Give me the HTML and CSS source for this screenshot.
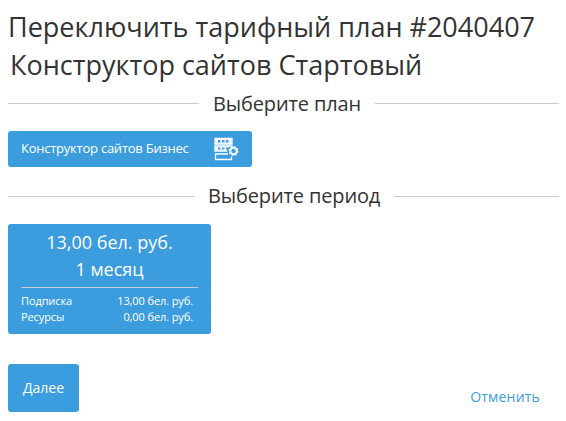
FILE: index.html
```html
<!DOCTYPE html>
<html lang="ru">
<head>
<meta charset="utf-8">
<title>Переключить тарифный план</title>
<link rel="stylesheet" href="styles.css">
</head>
<body>
<main class="page">
  <h1 class="title"><span class="title-line">Переключить тарифный план #2040407</span><span class="title-line title-plan">Конструктор сайтов Стартовый</span></h1>
  <h2 class="divider divider-plan">Выберите план</h2>
  <button class="plan">
    <span class="plan-name">Конструктор сайтов Бизнес</span>
    <svg class="plan-icon" viewBox="0 0 26 26" fill="none" stroke="#fff" stroke-width="1.3">
      <path d="M2 2.500h17v5.500H2zM19 11V10H2v5h12M15 18H2.500v5.500H18.500V20.500"/>
      <path d="M2.500 5.200h2.500M7.500 5.200h1.500M11.500 5.200h1.500M15.500 5.200h3M2.500 12.500h2.500M7.500 12.500h1.500M11.500 12.500h1.500" stroke-width="3"/>
      <path d="M2 3.500h17M2 7h17M2 11h14M2 14h12" stroke-width="1"/>
      <circle cx="20.500" cy="15" r="3.200" stroke-width="2"/>
      <circle cx="20.500" cy="15" r="4.400" stroke-width="1.200" stroke-dasharray="1.728 1.728"/>
    </svg>
  </button>
  <h2 class="divider divider-period">Выберите период</h2>
  <section class="period">
    <div class="price">13,00 бел. руб.</div>
    <div class="term">1 месяц</div>
    <dl class="costs">
      <div class="cost"><dt>Подписка</dt><dd>13,00 бел. руб.</dd></div>
      <div class="cost"><dt>Ресурсы</dt><dd>0,00 бел. руб.</dd></div>
    </dl>
  </section>
  <footer class="actions">
    <button class="next">Далее</button>
    <a class="cancel">Отменить</a>
  </footer>
</main>
</body>
</html>
```
FILE: styles.css
```css
* { box-sizing: border-box; }
body { margin: 0; background: #fff; color: #333; font-family: "Open Sans", sans-serif; }
.page { width: 566px; height: 421px; padding: 8px 7px 0 8px; overflow: hidden; }
h1, h2, dl, dd { margin: 0; font-weight: 400; }
button { border: 0; color: #fff; background: #3b9cde; border-radius: 3px; font: 13px "Open Sans", sans-serif; }
.title { font-size: 27px; line-height: 38px; }
.title-line { display: block; white-space: nowrap; }
.title-plan { padding-left: 2px; }
.divider { display: flex; align-items: center; font-size: 20px; line-height: 28px; letter-spacing: -0.14px; white-space: nowrap; }
.divider::before, .divider::after { content: ""; height: 1px; background: #ccc; }
.divider::before { margin-right: 14px; }
.divider::after { flex: 1; margin-left: 14px; }
.divider-plan { margin-top: 6px; }
.divider-plan::before, .divider-plan::after { margin-bottom: 2px; }
.divider-plan::before { width: 191px; }
.plan { display: flex; align-items: center; justify-content: space-between; width: 244px; height: 36px; margin-top: 13px; padding: 0 13px; }
.plan-name { padding-bottom: 2px; letter-spacing: -0.24px; }
.plan-icon { width: 26px; height: 26px; }
.divider-period { margin-top: 15px; }
.divider-period::before { width: 186px; }
.period { width: 203px; height: 110px; margin-top: 14px; padding: 5px 13px; border-radius: 3px; background: #3b9cde; color: #fff; }
.price, .term { font-size: 18px; line-height: 27px; text-align: center; }
.costs { margin-top: 4px; padding: 5px 5px 0 0; border-top: 1px solid #ccc; font-size: 11px; line-height: 16px; letter-spacing: -0.1px; }
.cost { display: flex; justify-content: space-between; }
.actions { display: flex; align-items: flex-start; justify-content: space-between; margin-top: 30px; padding-right: 19px; }
.next { width: 71px; height: 48px; padding: 0 0 2px; font-size: 14px; }
.cancel { margin-top: 23px; font-size: 14px; line-height: 20px; letter-spacing: 0.2px; color: #3b9cde; }
```
